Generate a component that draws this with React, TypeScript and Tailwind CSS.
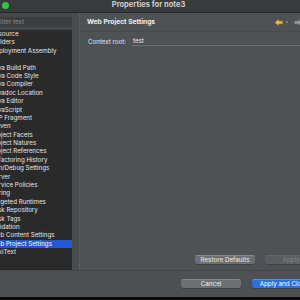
const items = [
  'Resource',
  'Builders',
  'Deployment Assembly',
  'Git',
  'Java Build Path',
  'Java Code Style',
  'Java Compiler',
  'Javadoc Location',
  'Java Editor',
  'JavaScript',
  'JSP Fragment',
  'Maven',
  'Project Facets',
  'Project Natures',
  'Project References',
  'Refactoring History',
  'Run/Debug Settings',
  'Server',
  'Service Policies',
  'Spring',
  'Targeted Runtimes',
  'Task Repository',
  'Task Tags',
  'Validation',
  'Web Content Settings',
  'Web Project Settings',
  'WikiText',
];

const selected = 'Web Project Settings';

const NavArrows = () => (
  <div className="flex items-center gap-[3px]">
    <svg width="8" height="7" viewBox="0 0 8 7">
      <polygon points="0,3.5 3.5,0.5 3.5,2.2 7.5,2.2 7.5,4.8 3.5,4.8 3.5,6.5" fill="#f3c545" stroke="#b88a1a" strokeWidth="0.6" />
    </svg>
    <div className="w-[2px] h-[2px] bg-[#7d8083]" />
    <svg width="8" height="7" viewBox="0 0 8 7" className="ml-[3px]">
      <polygon points="8,3.5 4.5,0.5 4.5,2.2 0.5,2.2 0.5,4.8 4.5,4.8 4.5,6.5" fill="#9a9da0" />
    </svg>
  </div>
);

const Btn = ({ label, kind = 'normal', width }: { label: string; kind?: 'normal' | 'primary' | 'disabled'; width: string }) => {
  const styles =
    kind === 'primary'
      ? 'bg-[#2f6ee0] text-white border-t border-[#5b8ff0]'
      : kind === 'disabled'
        ? 'bg-[#5b5e61] text-[#7f8286] border-t border-[#65686b]'
        : 'bg-[#6d7073] text-[#ececec] border-t border-[#85888b]';
  return (
    <div className={`${width} h-[9px] shrink-0 rounded-[2px] flex items-center justify-center text-[6.3px] leading-none whitespace-nowrap shadow-[0_0.5px_0.5px_rgba(0,0,0,0.4)] ${styles}`}>
      {label}
    </div>
  );
};

export default function App() {
  return (
    <div className="w-[300px] h-[300px] overflow-hidden flex flex-col bg-[#4e5154] text-[#e6e6e6]" style={{ fontFamily: 'Inter, "Liberation Sans", sans-serif' }}>
      {/* title bar */}
      <div className="h-[13px] shrink-0 relative flex items-center justify-center bg-[#383a3b] border-b border-[#262728]">
        <div className="absolute left-[2px] top-[1.5px] w-[7px] h-[7px] rounded-full bg-[#2bc840]" />
        <span className="text-[7.5px] font-bold text-[#cfcfcf] -mt-[3px] -ml-[3px]">Properties for note3</span>
      </div>

      <div className="flex-1 flex min-h-0">
        {/* left tree */}
        <div className="w-[72px] shrink-0 flex flex-col bg-[#46494c]">
          <div className="h-[17px] shrink-0 pt-[4px]">
            <div className="h-[10px] bg-[#3b3d3f] text-[6.2px] leading-[10px] text-[#8b8d90] whitespace-nowrap overflow-hidden">
              <div className="-ml-[2px]">filter text</div>
            </div>
          </div>
          <div className="flex-1 bg-[#2a2a2b] overflow-hidden border-b border-[#242526]">
            {items.map((it) => (
              <div key={it} className={`h-[8.4px] leading-[8.4px] text-[6.2px] whitespace-nowrap ${it === selected ? 'bg-[#2457d4] text-white' : 'text-[#e8e8e8]'}`}>
                <div className="-ml-[9px]">{it}</div>
              </div>
            ))}
          </div>
        </div>

        {/* sash */}
        <div className="w-[8px] shrink-0 bg-[#4a4d50] border-r border-[#5a5d60]" />

        {/* right pane */}
        <div className="flex-1 min-w-0 flex flex-col overflow-hidden bg-[#4f5255]">
          <div className="h-[19px] shrink-0 flex items-center justify-between pl-[7px] border-b border-[#47494c]">
            <span className="text-[6.7px] font-bold text-[#f0f0f0] whitespace-nowrap">Web Project Settings</span>
            <div className="-mr-[2px]"><NavArrows /></div>
          </div>
          <div className="flex items-end pl-[8px] pt-[4px] h-[14px]">
            <span className="text-[6.2px] leading-[9px] whitespace-nowrap text-[#e8e8e8] w-[44px]">Context root:</span>
            <div className="flex-1 h-[10px] border-b border-[#6c6f72] text-[6.2px] leading-[9px] pl-[1px] text-[#efefef]">test</div>
          </div>
          <div className="flex-1" />
          <div className="flex pl-[115px] gap-[10px] pb-[6px]">
            <Btn label="Restore Defaults" width="w-[60px]" />
            <Btn label="Apply" kind="disabled" width="w-[52px]" />
          </div>
        </div>
      </div>

      {/* footer */}
      <div className="h-[27px] shrink-0 border-t border-[#45474a] bg-[#4e5154] flex pt-[8px] pl-[181px] gap-[11px] overflow-hidden">
        <Btn label="Cancel" width="w-[60px]" />
        <Btn label="Apply and Close" width="w-[64px]" kind="primary" />
      </div>
      <div className="h-[3px] shrink-0 bg-[#0d0d0d]" />
    </div>
  );
}
